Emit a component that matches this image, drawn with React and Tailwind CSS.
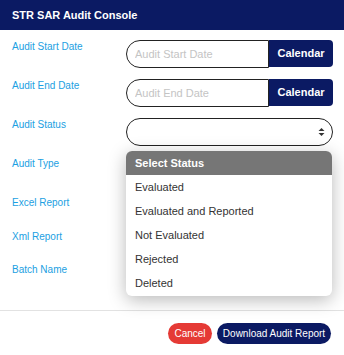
import React from 'react';

const font = { fontFamily: '"Liberation Sans", Arial, sans-serif' };

const options = ['Evaluated', 'Evaluated and Reported', 'Not Evaluated', 'Rejected', 'Deleted'];

const DateRow = ({ label, placeholder }) => (
    <div className="flex items-start h-[28px] mb-[11px]">
        <label className="w-[114px] text-[10px] leading-[12px] text-[#1ba0e2] pt-[1px]">{label}</label>
        <div className="flex w-[207px]">
            <input
                placeholder={placeholder}
                className="w-[143px] h-[28px] border border-[#222] rounded-l-[14px] pl-[8px] text-[11px] placeholder:text-[#c4c4c4] outline-none bg-white"
                style={font}
            />
            <button className="w-[64px] h-[27px] bg-[#0b1a63] text-white text-[11px] font-bold rounded-r-[4px]">
                Calendar
            </button>
        </div>
    </div>
);

const App = () => {
    return (
        <div className="w-[344px] h-[355px] bg-white overflow-hidden" style={font}>
            <div className="h-[30px] bg-[#0b1a63] flex items-center px-[12px]">
                <h1 className="text-white text-[11px] font-bold">STR SAR Audit Console</h1>
            </div>

            <div className="relative pt-[10px] pl-[12px] h-[280px]">
                <DateRow label="Audit Start Date" placeholder="Audit Start Date" />
                <DateRow label="Audit End Date" placeholder="Audit End Date" />

                <div className="flex items-start h-[28px] mb-[11px]">
                    <label className="w-[114px] text-[10px] leading-[12px] text-[#1ba0e2] pt-[1px]">Audit Status</label>
                    <div className="w-[207px] h-[28px] border border-[#222] rounded-[14px] flex items-center justify-end pr-[7px]">
                        <svg width="7" height="10" viewBox="0 0 7 10">
                            <path d="M3.5 1 L6.5 4 L0.5 4 Z" fill="#333" />
                            <path d="M3.5 9 L6.5 6 L0.5 6 Z" fill="#333" />
                        </svg>
                    </div>
                </div>

                <div className="flex items-start h-[28px] mb-[11px]">
                    <label className="w-[114px] text-[10px] leading-[12px] text-[#1ba0e2] pt-[1px]">Audit Type</label>
                </div>
                <div className="flex items-start h-[23px] mb-[11px]">
                    <label className="w-[114px] text-[10px] leading-[12px] text-[#1ba0e2] pt-[1px]">Excel Report</label>
                </div>
                <div className="flex items-start h-[22px] mb-[11px]">
                    <label className="w-[114px] text-[10px] leading-[12px] text-[#1ba0e2] pt-[1px]">Xml Report</label>
                </div>
                <div className="flex items-start h-[28px]">
                    <label className="w-[114px] text-[10px] leading-[12px] text-[#1ba0e2] pt-[1px]">Batch Name</label>
                    <div className="w-[205px] h-[28px] border border-[#222] rounded-[14px]" />
                </div>

                <div className="absolute left-[126px] top-[121px] w-[206px] h-[145px] bg-white rounded-[6px] shadow-[0_4px_18px_rgba(0,0,0,0.28)] overflow-hidden">
                    <div className="h-[24px] bg-[#767676] flex items-center px-[9px] text-white text-[11px] font-bold">
                        Select Status
                    </div>
                    {options.map((opt) => (
                        <div key={opt} className="h-[24px] flex items-center px-[9px] text-[11px] text-[#333]">
                            {opt}
                        </div>
                    ))}
                </div>
            </div>

            <div className="border-t border-[#e2e2e2] flex justify-end items-center gap-[5px] pr-[13px] pt-[12px]">
                <button className="w-[44px] h-[21px] rounded-full bg-[#e53a35] text-white text-[10px]">Cancel</button>
                <button className="w-[114px] h-[21px] rounded-full bg-[#0b1a63] text-white text-[10px]">
                    Download Audit Report
                </button>
            </div>
        </div>
    );
};

export default App;
